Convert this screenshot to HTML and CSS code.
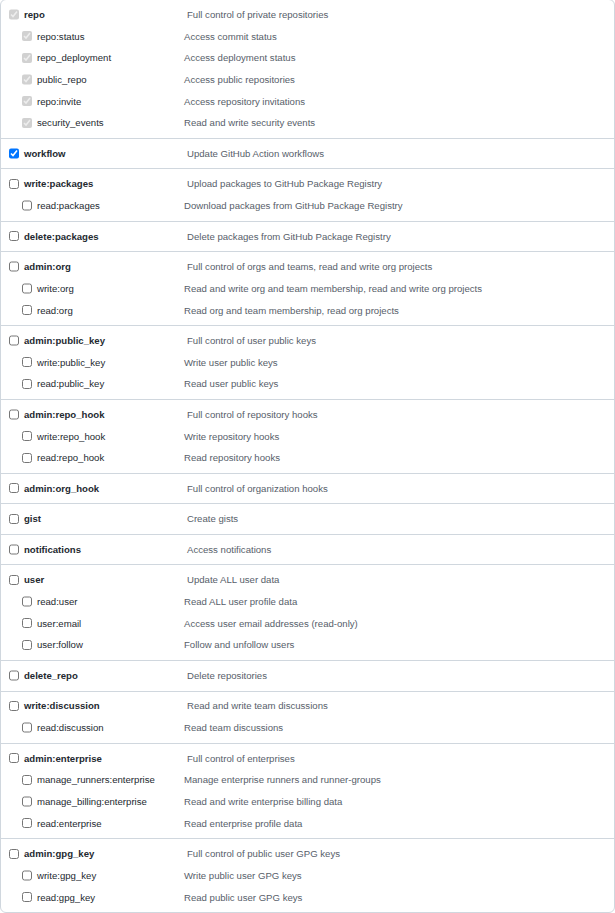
FILE: index.html
```html
<!DOCTYPE html>
<html lang="en">
<head>
<meta charset="utf-8">
<title>Scopes</title>
<link rel="stylesheet" href="styles.css">
</head>
<body>
<div class="scopes">
  <div class="group">
    <label class="row parent"><input type="checkbox" checked disabled><span class="name">repo</span><span class="desc">Full control of private repositories</span></label>
    <label class="row child"><input type="checkbox" checked disabled><span class="name">repo:status</span><span class="desc">Access commit status</span></label>
    <label class="row child"><input type="checkbox" checked disabled><span class="name">repo_deployment</span><span class="desc">Access deployment status</span></label>
    <label class="row child"><input type="checkbox" checked disabled><span class="name">public_repo</span><span class="desc">Access public repositories</span></label>
    <label class="row child"><input type="checkbox" checked disabled><span class="name">repo:invite</span><span class="desc">Access repository invitations</span></label>
    <label class="row child"><input type="checkbox" checked disabled><span class="name">security_events</span><span class="desc">Read and write security events</span></label>
  </div>
  <div class="group">
    <label class="row parent"><input type="checkbox" checked><span class="name">workflow</span><span class="desc">Update GitHub Action workflows</span></label>
  </div>
  <div class="group">
    <label class="row parent"><input type="checkbox"><span class="name">write:packages</span><span class="desc">Upload packages to GitHub Package Registry</span></label>
    <label class="row child"><input type="checkbox"><span class="name">read:packages</span><span class="desc">Download packages from GitHub Package Registry</span></label>
  </div>
  <div class="group">
    <label class="row parent"><input type="checkbox"><span class="name">delete:packages</span><span class="desc">Delete packages from GitHub Package Registry</span></label>
  </div>
  <div class="group">
    <label class="row parent"><input type="checkbox"><span class="name">admin:org</span><span class="desc">Full control of orgs and teams, read and write org projects</span></label>
    <label class="row child"><input type="checkbox"><span class="name">write:org</span><span class="desc">Read and write org and team membership, read and write org projects</span></label>
    <label class="row child"><input type="checkbox"><span class="name">read:org</span><span class="desc">Read org and team membership, read org projects</span></label>
  </div>
  <div class="group">
    <label class="row parent"><input type="checkbox"><span class="name">admin:public_key</span><span class="desc">Full control of user public keys</span></label>
    <label class="row child"><input type="checkbox"><span class="name">write:public_key</span><span class="desc">Write user public keys</span></label>
    <label class="row child"><input type="checkbox"><span class="name">read:public_key</span><span class="desc">Read user public keys</span></label>
  </div>
  <div class="group">
    <label class="row parent"><input type="checkbox"><span class="name">admin:repo_hook</span><span class="desc">Full control of repository hooks</span></label>
    <label class="row child"><input type="checkbox"><span class="name">write:repo_hook</span><span class="desc">Write repository hooks</span></label>
    <label class="row child"><input type="checkbox"><span class="name">read:repo_hook</span><span class="desc">Read repository hooks</span></label>
  </div>
  <div class="group">
    <label class="row parent"><input type="checkbox"><span class="name">admin:org_hook</span><span class="desc">Full control of organization hooks</span></label>
  </div>
  <div class="group">
    <label class="row parent"><input type="checkbox"><span class="name">gist</span><span class="desc">Create gists</span></label>
  </div>
  <div class="group">
    <label class="row parent"><input type="checkbox"><span class="name">notifications</span><span class="desc">Access notifications</span></label>
  </div>
  <div class="group">
    <label class="row parent"><input type="checkbox"><span class="name">user</span><span class="desc">Update ALL user data</span></label>
    <label class="row child"><input type="checkbox"><span class="name">read:user</span><span class="desc">Read ALL user profile data</span></label>
    <label class="row child"><input type="checkbox"><span class="name">user:email</span><span class="desc">Access user email addresses (read-only)</span></label>
    <label class="row child"><input type="checkbox"><span class="name">user:follow</span><span class="desc">Follow and unfollow users</span></label>
  </div>
  <div class="group">
    <label class="row parent"><input type="checkbox"><span class="name">delete_repo</span><span class="desc">Delete repositories</span></label>
  </div>
  <div class="group">
    <label class="row parent"><input type="checkbox"><span class="name">write:discussion</span><span class="desc">Read and write team discussions</span></label>
    <label class="row child"><input type="checkbox"><span class="name">read:discussion</span><span class="desc">Read team discussions</span></label>
  </div>
  <div class="group">
    <label class="row parent"><input type="checkbox"><span class="name">admin:enterprise</span><span class="desc">Full control of enterprises</span></label>
    <label class="row child"><input type="checkbox"><span class="name">manage_runners:enterprise</span><span class="desc">Manage enterprise runners and runner-groups</span></label>
    <label class="row child"><input type="checkbox"><span class="name">manage_billing:enterprise</span><span class="desc">Read and write enterprise billing data</span></label>
    <label class="row child"><input type="checkbox"><span class="name">read:enterprise</span><span class="desc">Read enterprise profile data</span></label>
  </div>
  <div class="group">
    <label class="row parent"><input type="checkbox"><span class="name">admin:gpg_key</span><span class="desc">Full control of public user GPG keys</span></label>
    <label class="row child"><input type="checkbox"><span class="name">write:gpg_key</span><span class="desc">Write public user GPG keys</span></label>
    <label class="row child"><input type="checkbox"><span class="name">read:gpg_key</span><span class="desc">Read public user GPG keys</span></label>
  </div>
</div>
</body>
</html>
```
FILE: styles.css
```css
html, body {
  margin: 0;
  padding: 0;
  background: #ffffff;
}

body {
  font-family: "Liberation Sans", Arial, Helvetica, sans-serif;
  font-size: 9.6px;
  color: #24292f;
}

.scopes {
  margin-top: -1px;
  border: 1px solid #d0d7de;
  border-radius: 6px;
  overflow: hidden;
}

.group {
  padding: 3.6px 0 4.24px;
}

.group + .group {
  border-top: 1px solid #d0d7de;
}

.row {
  display: flex;
  align-items: center;
  height: 21.69px;
  white-space: nowrap;
}

.row input {
  width: 10.4px;
  height: 10.4px;
  margin: 0 4.6px 0 0;
  flex: none;
}

.parent {
  padding-left: 8px;
}

.child {
  padding-left: 21px;
}

.name {
  flex: none;
  color: #24292f;
}

.parent .name {
  width: 163px;
  font-weight: bold;
}

.child .name {
  width: 147px;
}

.desc {
  color: #57606a;
}
```
